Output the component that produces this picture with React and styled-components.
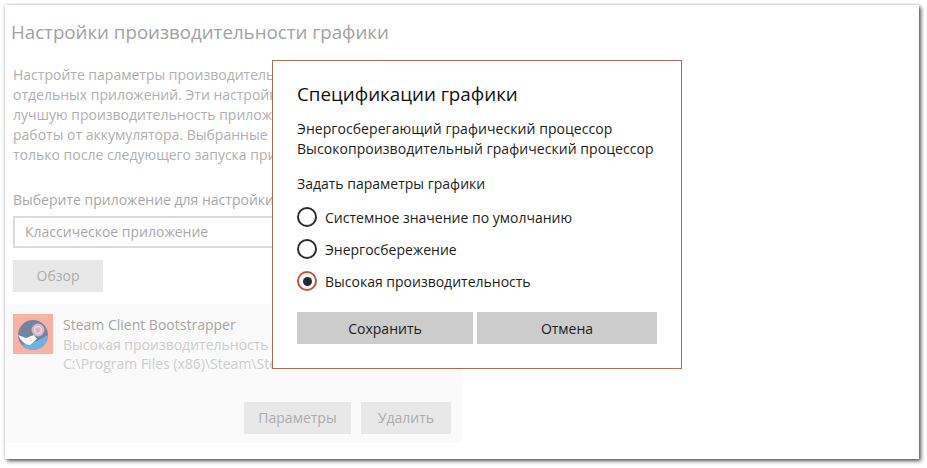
import styled, { createGlobalStyle } from "styled-components";

const GlobalStyle = createGlobalStyle`
  html, body {
    margin: 0;
    background: #ffffff;
    font-family: "Open Sans", "Noto Sans", sans-serif;
  }
`;

const SteamIcon = () => (
  <svg width="40" height="40" viewBox="0 0 40 40">
    <circle cx="20" cy="21" r="15" fill="#74849f" />
    <path d="M9 31 C12 34 16 36 20 36 C28 36 35 29 35 21 L24 27 Z" fill="#72b2e2" />
    <path d="M5 21 L13 24 L21 21 L24 25 L17 31 C12 31 8 27 5 21 Z" fill="#f7f7f7" />
    <circle cx="25" cy="16" r="6.500" fill="#d9b3c4" />
    <circle cx="25" cy="16" r="3.500" fill="none" stroke="#eed8e0" strokeWidth="1.500" />
  </svg>
);

const App = () => {
  return (
    <Page>
      <GlobalStyle />
      <Window>
        <Settings>
          <Heading>Настройки производительности графики</Heading>
          <Intro>
            Настройте параметры производительности графики для
            <br />
            отдельных приложений. Эти настройки могут обеспечить
            <br />
            лучшую производительность приложения или увеличить время
            <br />
            работы от аккумулятора. Выбранные параметры вступят в силу
            <br />
            только после следующего запуска приложения.
          </Intro>
          <FieldLabel>Выберите приложение для настройки параметров</FieldLabel>
          <Select>Классическое приложение</Select>
          <BrowseButton $width={90}>Обзор</BrowseButton>
          <AppCard>
            <AppRow>
              <IconTile>
                <SteamIcon />
              </IconTile>
              <AppInfo>
                <AppName>Steam Client Bootstrapper</AppName>
                <AppMeta>Высокая производительность</AppMeta>
                <AppMeta>C:\Program Files (x86)\Steam\Steam.exe</AppMeta>
              </AppInfo>
            </AppRow>
            <CardActions>
              <GhostButton $width={107}>Параметры</GhostButton>
              <GhostButton $width={90}>Удалить</GhostButton>
            </CardActions>
          </AppCard>
        </Settings>
        <Dialog>
          <DialogTitle>Спецификации графики</DialogTitle>
          <InfoLine>Энергосберегающий графический процессор</InfoLine>
          <InfoLine>Высокопроизводительный графический процессор</InfoLine>
          <GroupLabel>Задать параметры графики</GroupLabel>
          <RadioList>
            <RadioRow>
              <RadioMark />
              Системное значение по умолчанию
            </RadioRow>
            <RadioRow>
              <RadioMark />
              Энергосбережение
            </RadioRow>
            <RadioRow>
              <RadioMark $checked />
              Высокая производительность
            </RadioRow>
          </RadioList>
          <DialogActions>
            <DialogButton $width={176}>Сохранить</DialogButton>
            <DialogButton $width={180}>Отмена</DialogButton>
          </DialogActions>
        </Dialog>
      </Window>
    </Page>
  );
};

export default App;

const Page = styled.div`
  width: 927px;
  height: 468px;
  padding: 5px 8px 9px 5px;
  box-sizing: border-box;
  overflow: hidden;
`;

const Window = styled.div`
  position: relative;
  height: 454px;
  background: #ffffff;
  box-shadow: 2px 2px 4px rgba(0, 0, 0, 0.65), 0 0 3px rgba(0, 0, 0, 0.2);
`;

const Settings = styled.div`
  width: 457px;
  height: 100%;
  display: flex;
  flex-direction: column;
  align-items: flex-start;
`;

const Heading = styled.h1`
  margin: 14px 0 0 6px;
  font-size: 18.7px;
  line-height: 26px;
  font-weight: 400;
  color: #a2a2a2;
  white-space: nowrap;
`;

const Intro = styled.p`
  margin: 20px 0 0 8px;
  font-size: 14px;
  line-height: 20px;
  color: #b0b0b0;
  white-space: nowrap;
`;

const FieldLabel = styled.div`
  margin: 25px 0 0 8px;
  font-size: 14px;
  line-height: 20px;
  color: #a8a8a8;
  white-space: nowrap;
`;

const Select = styled.div`
  margin: 6px 0 0 8px;
  width: 300px;
  height: 32px;
  box-sizing: border-box;
  padding-left: 10px;
  border: 2px solid #dadada;
  font-size: 14px;
  line-height: 28px;
  color: #a8a8a8;
`;

const GhostButton = styled.div`
  width: ${(p) => p.$width}px;
  height: 32px;
  flex-shrink: 0;
  background: #e8e8e8;
  font-size: 14px;
  line-height: 32px;
  text-align: center;
  color: #acacac;
`;

const BrowseButton = styled(GhostButton)`
  margin: 12px 0 0 8px;
`;

const AppCard = styled.div`
  margin-top: 12px;
  width: 457px;
  height: 139px;
  padding: 10px 11px 9px 8px;
  box-sizing: border-box;
  background: #fafafa;
  display: flex;
  flex-direction: column;
  justify-content: space-between;
`;

const AppRow = styled.div`
  display: flex;
  gap: 10px;
`;

const IconTile = styled.div`
  width: 40px;
  height: 40px;
  background: #f9b1a5;
`;

const AppInfo = styled.div`
  padding-top: 1px;
  font-size: 14px;
  line-height: 19.5px;
  white-space: nowrap;
`;

const AppName = styled.div`
  color: #a6a6a6;
`;

const AppMeta = styled.div`
  color: #cdcdcd;
`;

const CardActions = styled.div`
  display: flex;
  justify-content: flex-end;
  gap: 10px;
`;

const Dialog = styled.div`
  position: absolute;
  left: 267px;
  top: 55px;
  width: 410px;
  height: 309px;
  box-sizing: border-box;
  padding: 19px 24px 0;
  background: #ffffff;
  border: 1px solid #b06a58;
  color: #1c1c1c;
`;

const DialogTitle = styled.h2`
  margin: 0 0 11px;
  font-size: 18.8px;
  line-height: 28px;
  font-weight: 400;
  color: #111111;
`;

const InfoLine = styled.div`
  font-size: 14px;
  line-height: 20px;
  letter-spacing: 0.06px;
  white-space: nowrap;
`;

const GroupLabel = styled.div`
  margin-top: 15px;
  font-size: 14px;
  line-height: 20px;
`;

const RadioList = styled.div`
  margin-top: 13px;
  display: flex;
  flex-direction: column;
  gap: 12px;
`;

const RadioRow = styled.div`
  display: flex;
  align-items: center;
  gap: 8px;
  height: 20px;
  font-size: 14px;
`;

const RadioMark = styled.span`
  width: 20px;
  height: 20px;
  box-sizing: border-box;
  border-radius: 50%;
  border: 2px solid ${(p) => (p.$checked ? "#c4533a" : "#2b2b2b")};
  display: flex;
  align-items: center;
  justify-content: center;

  &::after {
    content: "";
    display: ${(p) => (p.$checked ? "block" : "none")};
    width: 9px;
    height: 9px;
    border-radius: 50%;
    background: #232830;
  }
`;

const DialogActions = styled.div`
  margin-top: 21px;
  display: flex;
  gap: 4px;
`;

const DialogButton = styled.div`
  width: ${(p) => p.$width}px;
  height: 32px;
  background: #cccccc;
  font-size: 14px;
  line-height: 34px;
  text-align: center;
  color: #1c1c1c;
`;
